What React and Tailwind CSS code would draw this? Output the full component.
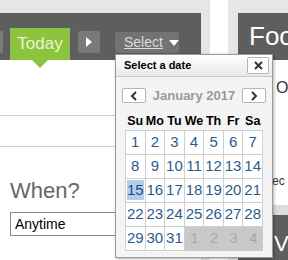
import React from "react";

const days = [
  [1, 2, 3, 4, 5, 6, 7],
  [8, 9, 10, 11, 12, 13, 14],
  [15, 16, 17, 18, 19, 20, 21],
  [22, 23, 24, 25, 26, 27, 28],
  [29, 30, 31, -1, -2, -3, -4],
];

const Chevron = ({ dir }) => (
  <svg width="8" height="10" viewBox="0 0 8 10">
    <path
      d={dir === "left" ? "M6 1 L2 5 L6 9" : "M2 1 L6 5 L2 9"}
      fill="none"
      stroke="#333"
      strokeWidth="2"
    />
  </svg>
);

const DatePopup = () => {
  return (
    <div className="absolute left-[115px] top-[54px] w-[158px] h-[204px] bg-[#f4f4f4] border border-[#9a9a9a] shadow-[1px_1px_3px_rgba(0,0,0,0.3)] flex flex-col">
      <div className="h-[22px] flex items-center justify-between pl-[8px] pr-[3px] bg-gradient-to-b from-white to-[#e9e9e9] border-b border-[#c8c8c8]">
        <span className="text-[11px] font-bold text-black">Select a date</span>
        <button className="w-[22px] h-[17px] bg-white border border-[#b5b5b5] rounded-[2px] flex items-center justify-center">
          <svg width="9" height="9" viewBox="0 0 9 9">
            <path d="M1 1 L8 8 M8 1 L1 8" stroke="#333" strokeWidth="2" />
          </svg>
        </button>
      </div>
      <div className="flex items-center justify-between px-[6px] mt-[9px]">
        <button className="w-[24px] h-[15px] bg-white border border-[#b5b5b5] rounded-[2px] flex items-center justify-center">
          <Chevron dir="left" />
        </button>
        <span className="text-[13px] font-bold text-[#9a9a9a]">January 2017</span>
        <button className="w-[24px] h-[15px] bg-white border border-[#b5b5b5] rounded-[2px] flex items-center justify-center">
          <Chevron dir="right" />
        </button>
      </div>
      <div className="grid grid-cols-7 w-[137px] mx-auto mt-[6px] text-[12.5px] font-bold text-black text-center">
        {["Su", "Mo", "Tu", "We", "Th", "Fr", "Sa"].map((d) => (
          <div key={d} className="h-[18px] leading-[18px]">
            {d}
          </div>
        ))}
      </div>
      <div className="grid grid-cols-7 w-[138px] mx-auto border-t border-l border-[#cfcfcf]">
        {days.flat().map((n, i) => {
          if (n < 0) {
            return (
              <div key={i} className="h-[24px] bg-[#c9c9c9] text-[#a8a8a8] text-[15px] flex items-center justify-center">
                {-n}
              </div>
            );
          }
          return (
            <div key={i} className="h-[24px] bg-white border-r border-b border-[#cfcfcf] flex items-center justify-center">
              <span
                className={
                  n === 15
                    ? "w-[17px] h-[20px] bg-[#b3cdee] text-[#1f4a78] text-[15px] flex items-center justify-center"
                    : "text-[#2b5d8c] text-[15px]"
                }
              >
                {n}
              </span>
            </div>
          );
        })}
      </div>
    </div>
  );
};

const App = () => {
  return (
    <div className="relative w-[288px] h-[260px] overflow-hidden bg-white flex font-['Liberation_Sans',Arial,sans-serif]">
      <div className="w-[210px] shrink-0 border-t-[13px] border-r-[9px] border-[#e6e6e6] flex flex-col">
        <div className="h-[47px] bg-[#5e5e5e] flex items-end">
          <div className="w-[3px] h-[22px] mb-[7px] bg-[#7a7a7a]" />
          <div className="relative ml-[7px] w-[60px] h-[32px] bg-[#8cc43d] flex items-center justify-center text-[17px] text-[#eaf5d5]">
            Today
            <div className="absolute left-[22px] top-[32px] w-0 h-0 border-l-[8px] border-r-[8px] border-t-[8px] border-l-transparent border-r-transparent border-t-[#8cc43d]" />
          </div>
          <div className="ml-[8px] mb-[7px] w-[22px] h-[22px] bg-[#7a7a7a] rounded-[2px] flex items-center justify-center">
            <div className="w-0 h-0 border-t-[5px] border-b-[5px] border-l-[6px] border-t-transparent border-b-transparent border-l-white" />
          </div>
          <div className="ml-[15px] mb-[7px] w-[64px] h-[21px] bg-[#737373] rounded-[3px] flex items-center pl-[9px] gap-[6px]">
            <span className="text-[14px] text-[#dcdcdc] underline">Select</span>
            <div className="w-0 h-0 border-l-[5px] border-r-[5px] border-t-[6px] border-l-transparent border-r-transparent border-t-white" />
          </div>
        </div>
        <div className="h-[55px]" />
        <div className="h-[32px] border-t border-b border-[#cfcfcf]" />
        <div className="pl-[10px] pt-[33px]">
          <div className="text-[22px] text-[#666] leading-none">When?</div>
          <div className="mt-[10px] w-[200px] h-[24px] border border-[#888] flex items-center pl-[4px] text-[14px] text-black">
            Anytime
          </div>
        </div>
      </div>
      <div className="w-[18px] shrink-0" />
      <div className="w-[100px] shrink-0 border-t-[13px] border-l-[10px] border-[#e6e6e6] flex flex-col">
        <div className="h-[47px] bg-[#5e5e5e] flex items-center pl-[11px] text-[26px] text-white">Foo</div>
        <div className="flex-1 pl-[38px] pt-[16px] text-[16px] text-[#333] relative">
          <div>O</div>
          <div className="mt-[72px] text-[12px] -ml-[4px]">ec</div>
        </div>
        <div className="h-[10px] bg-[#dcdcdc]" />
        <div className="h-[45px] bg-[#5e5e5e] pl-[36px] pt-[12px] text-[22px] text-white">Ve</div>
      </div>
      <DatePopup />
    </div>
  );
};

export default App;
